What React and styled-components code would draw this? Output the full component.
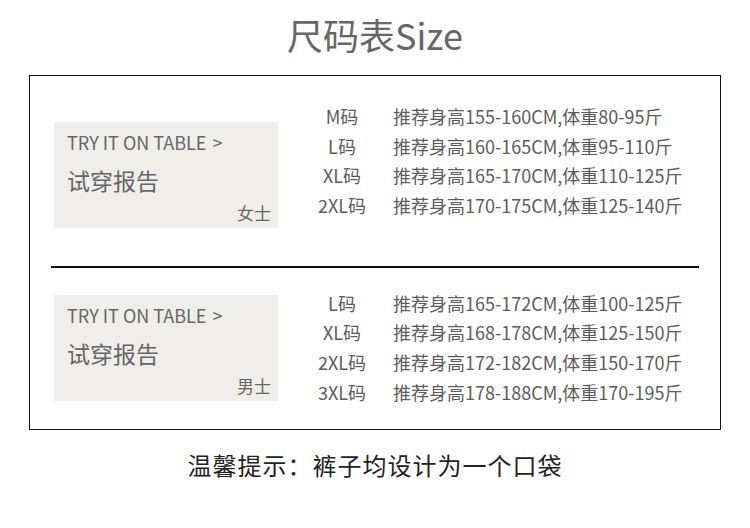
import React from "react";
import styled, { createGlobalStyle } from "styled-components";

const Global = createGlobalStyle`
  html, body { margin: 0; padding: 0; background: #fff; }
  body { font-family: "Noto Sans CJK SC", "Noto Sans", sans-serif; }
`;

const Page = styled.div`
  width: 750px;
  height: 528px;
  display: flex;
  flex-direction: column;
  align-items: center;
  padding-top: 12px;
  box-sizing: border-box;
`;

const Title = styled.h1`
  margin: 0;
  font-weight: 400;
  font-size: 36px;
  line-height: 44px;
  color: #666;
`;

const Box = styled.div`
  margin-top: 19px;
  width: 692px;
  height: 355px;
  box-sizing: border-box;
  border: 1px solid #111;
  display: flex;
  flex-direction: column;
`;

const Section = styled.div`
  display: flex;
  align-items: flex-start;
  padding-left: 24px;
  height: ${(p) => p.$h}px;
`;

const Divider = styled.div`
  margin: 0 21px;
  height: 1.5px;
  background: #111;
`;

const Card = styled.div`
  margin-top: ${(p) => p.$top}px;
  width: 224px;
  height: 106px;
  background: #efeeea;
  padding: 8px 7px 0 13px;
  box-sizing: border-box;
  display: flex;
  flex-direction: column;
  color: #666;
`;

const CardEn = styled.div`
  font-size: 18px;
  line-height: 24px;
  white-space: nowrap;
`;

const Chevron = styled.span`
  margin-left: 6px;
`;

const CardZh = styled.div`
  margin-top: 11px;
  font-size: 23px;
  line-height: 30px;
`;

const CardGender = styled.div`
  margin-top: 8px;
  font-size: 17px;
  line-height: 20px;
  text-align: right;
`;

const Table = styled.div`
  margin-top: ${(p) => p.$top}px;
  margin-left: 31px;
  display: grid;
  grid-template-columns: 66px auto;
  column-gap: 18px;
  color: #5c5c5c;
  font-size: 18px;
  line-height: 29.7px;
`;

const SizeCell = styled.div`
  text-align: center;
`;

const DescCell = styled.div`
  white-space: nowrap;
`;

const Note = styled.div`
  margin-top: 20px;
  font-size: 24px;
  line-height: 30px;
  letter-spacing: 1px;
  color: #222;
`;

const women = [
  ["M码", "推荐身高155-160CM,体重80-95斤"],
  ["L码", "推荐身高160-165CM,体重95-110斤"],
  ["XL码", "推荐身高165-170CM,体重110-125斤"],
  ["2XL码", "推荐身高170-175CM,体重125-140斤"],
];

const men = [
  ["L码", "推荐身高165-172CM,体重100-125斤"],
  ["XL码", "推荐身高168-178CM,体重125-150斤"],
  ["2XL码", "推荐身高172-182CM,体重150-170斤"],
  ["3XL码", "推荐身高178-188CM,体重170-195斤"],
];

function Group({ h, cardTop, tableTop, gender, rows }) {
  return (
    <Section $h={h}>
      <Card $top={cardTop}>
        <CardEn>
          TRY IT ON TABLE<Chevron>&gt;</Chevron>
        </CardEn>
        <CardZh>试穿报告</CardZh>
        <CardGender>{gender}</CardGender>
      </Card>
      <Table $top={tableTop}>
        {rows.map(([s, d]) => (
          <React.Fragment key={s}>
            <SizeCell>{s}</SizeCell>
            <DescCell>{d}</DescCell>
          </React.Fragment>
        ))}
      </Table>
    </Section>
  );
}

export default function App() {
  return (
    <>
      <Global />
      <Page>
        <Title>尺码表Size</Title>
        <Box>
          <Group h={190} cardTop={46} tableTop={26} gender="女士" rows={women} />
          <Divider />
          <Group h={161} cardTop={27} tableTop={21} gender="男士" rows={men} />
        </Box>
        <Note>温馨提示：裤子均设计为一个口袋</Note>
      </Page>
    </>
  );
}
